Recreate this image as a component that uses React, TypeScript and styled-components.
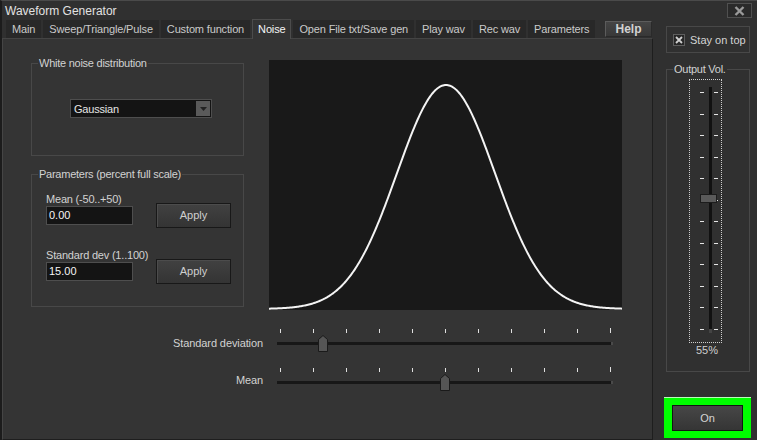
import React from 'react';
import styled, { createGlobalStyle } from 'styled-components';

const GlobalStyle = createGlobalStyle`
  html, body { margin: 0; padding: 0; background: #303030; }
  body { font-family: "Liberation Sans", Arial, sans-serif; font-size: 11px; color: #d0d0d0; }
  * { box-sizing: border-box; }
`;

const Window = styled.div`
  width: 757px;
  height: 440px;
  overflow: hidden;
  background: #303030;
  border-top: 1px solid #4a4a4a;
  border-left: 2px solid #1c1c1c;
  display: flex;
  flex-direction: column;
`;

const TitleBar = styled.div`
  height: 19px;
  display: flex;
  align-items: center;
  justify-content: space-between;
  padding: 0 5px 0 3px;
`;

const Title = styled.span`
  font-size: 12px;
  color: #e2e2e2;
`;

const CloseBox = styled.div`
  width: 25px;
  height: 15px;
  border: 1px solid #505050;
  background: #2a2a2a;
  display: flex;
  align-items: center;
  justify-content: center;
`;

const Body = styled.div`
  flex: 1;
  display: flex;
  min-height: 0;
`;

const MainCol = styled.div`
  width: 651px;
  display: flex;
  flex-direction: column;
`;

const TabRow = styled.div`
  height: 18px;
  display: flex;
  align-items: flex-end;
  gap: 2px;
  padding-left: 4px;
  position: relative;
  z-index: 1;
`;

const Tab = styled.div<{ $active?: boolean }>`
  height: ${(p) => (p.$active ? 20 : 18)}px;
  margin-bottom: ${(p) => (p.$active ? -1 : 0)}px;
  padding: 0 ${(p) => (p.$active ? 5 : 6)}px;
  line-height: ${(p) => (p.$active ? 19 : 18)}px;
  letter-spacing: -0.15px;
  background: ${(p) => (p.$active ? '#343434' : '#282828')};
  color: ${(p) => (p.$active ? '#f4f4f4' : '#cacaca')};
  border: ${(p) => (p.$active ? '1px solid #4c4c4c' : 'none')};
  border-bottom: none;
  white-space: nowrap;
  flex-shrink: 0;
`;

const HelpButton = styled.div`
  margin-left: auto;
  margin-right: 1px;
  align-self: flex-start;
  margin-top: 1px;
  width: 47px;
  flex-shrink: 0;
  height: 16px;
  border: 1px solid #5c5c5c;
  border-bottom-color: #2a2a2a;
  border-right-color: #2a2a2a;
  background: linear-gradient(#454545, #383838);
  color: #d2d2d2;
  font-weight: bold;
  font-size: 12px;
  line-height: 14px;
  text-align: center;
`;

const Panel = styled.div`
  flex: 1;
  background: #343434;
  border: 1px solid #1e1e1e;
  border-left-color: #454545;
  border-top-color: #444444;
  padding: 21px 0 0 28px;
  display: flex;
  flex-direction: column;
`;

const TopRow = styled.div`
  display: flex;
  align-items: flex-start;
  gap: 25px;
`;

const LeftCol = styled.div`
  width: 213px;
  padding-top: 3px;
  display: flex;
  flex-direction: column;
  gap: 18px;
`;

const GroupBox = styled.div<{ $h: number }>`
  position: relative;
  height: ${(p) => p.$h}px;
  border: 1px solid #484848;
`;

const GroupLegend = styled.span`
  position: absolute;
  top: -8px;
  left: 6px;
  padding: 0 1px;
  line-height: 14px;
  letter-spacing: -0.25px;
  background: #343434;
  color: #d2d2d2;
  white-space: nowrap;
`;

const DistContent = styled.div`
  padding: 35px 0 0 38px;
`;

const Select = styled.div`
  width: 142px;
  height: 19px;
  background: #141414;
  border: 1px solid #4e4e4e;
  display: flex;
  align-items: center;
  justify-content: space-between;
  padding: 0 1px 0 3px;
  color: #e6e6e6;
  letter-spacing: -0.2px;
`;

const SelectArrow = styled.div`
  width: 14px;
  height: 15px;
  background: #5a5a5a;
  display: flex;
  align-items: center;
  justify-content: center;
`;

const ParamsContent = styled.div`
  padding: 17px 0 0 14px;
  display: flex;
  flex-direction: column;
  gap: 20px;
`;

const Field = styled.div`
  display: flex;
  flex-direction: column;
`;

const FieldLabel = styled.div`
  line-height: 14px;
  margin-bottom: -3px;
  letter-spacing: -0.2px;
  color: #d2d2d2;
  white-space: nowrap;
`;

const FieldRow = styled.div`
  display: flex;
  align-items: center;
  gap: 23px;
`;

const TextInput = styled.div`
  width: 87px;
  height: 19px;
  background: #141414;
  border: 1px solid #4e4e4e;
  padding-left: 2px;
  line-height: 17px;
  color: #f4f4f4;
`;

const Button = styled.div`
  width: 75px;
  height: 25px;
  border: 1px solid #181818;
  background: linear-gradient(#414141, #343434);
  box-shadow: inset 1px 1px 0 #4c4c4c;
  color: #cfcfcf;
  line-height: 23px;
  text-align: center;
`;

const Chart = styled.div`
  width: 353px;
  height: 250px;
  background: #191919;
`;

const Sliders = styled.div`
  margin-top: 18px;
  display: flex;
  flex-direction: column;
`;

const SliderRow = styled.div`
  height: 39px;
  display: grid;
  grid-template-columns: 232px 336px;
  column-gap: 14px;
  align-items: start;
`;

const SliderLabel = styled.div<{ $dy: number }>`
  padding-top: ${(p) => p.$dy}px;
  line-height: 14px;
  text-align: right;
  letter-spacing: -0.1px;
  color: #d2d2d2;
`;

const SliderBody = styled.div`
  position: relative;
  height: 24px;
`;

const TickRow = styled.div`
  height: 5px;
  display: flex;
  justify-content: space-between;
  align-items: flex-end;
  padding: 0 2px 0 3px;
`;

const HTick = styled.span<{ $tall?: boolean }>`
  width: 1px;
  height: ${(p) => (p.$tall ? 5 : 4)}px;
  background: #e0e0e0;
`;

const HTrack = styled.div`
  margin-top: 9px;
  height: 3px;
  background: #171717;
  border-right: 2px solid #4a4a4a;
`;

const HThumb = styled.svg`
  position: absolute;
  top: 7px;
  width: 10px;
  height: 17px;
`;

const Sidebar = styled.div`
  width: 104px;
  padding: 6px 7px 0 13px;
  display: flex;
  flex-direction: column;
`;

const StayBox = styled.div`
  height: 27px;
  border: 1px solid #484848;
  display: flex;
  align-items: center;
  gap: 5px;
  padding-left: 6px;
  color: #d4d4d4;
`;

const CheckBox = styled.div`
  width: 12px;
  height: 12px;
  border: 1px solid #5e5e5e;
  background: #262626;
  display: flex;
  align-items: center;
  justify-content: center;
`;

const VolGroup = styled(GroupBox)`
  margin-top: 16px;
  background: #303030;
`;

const VolLegend = styled(GroupLegend)`
  background: #303030;
`;

const VolContent = styled.div`
  padding: 9px 0 0 22px;
  width: 60px;
  display: flex;
  flex-direction: column;
  align-items: flex-start;
`;

const DottedBox = styled.div`
  position: relative;
  width: 33px;
  height: 264px;
  border: 1px dotted #cfcfcf;
  display: flex;
  align-items: flex-start;
  padding-left: 10px;
`;

const VTickCol = styled.div`
  margin-top: 12px;
  width: 4px;
  height: 238px;
  display: flex;
  flex-direction: column;
  justify-content: space-between;
`;

const VTick = styled.span`
  height: 1px;
  background: #e6e6e6;
`;

const VTrack = styled.div`
  margin: 7px 2px 0 5px;
  width: 3px;
  height: 246px;
  background: #111;
  border-bottom: 4px solid #444;
`;

const VThumb = styled.div`
  position: absolute;
  left: 10px;
  width: 17px;
  height: 9px;
  background: #5a5a5a;
  border: 1px solid #1c1c1c;
`;

const Percent = styled.div`
  width: 33px;
  padding-left: 3px;
  text-align: center;
  line-height: 14px;
  color: #cfcfcf;
`;

const OnFrame = styled.div`
  margin: 25px 0 0 -2px;
  width: 87px;
  height: 41px;
  background: #00ff00;
  border-top: 1px solid #b8ffb8;
  padding: 7px 8px 7px 8px;
`;

const OnButton = styled.div`
  width: 71px;
  height: 26px;
  border: 1px solid #141414;
  background: linear-gradient(#474747, #353535);
  color: #d4d4d4;
  line-height: 24px;
  text-align: center;
`;

const tabs = ['Main', 'Sweep/Triangle/Pulse', 'Custom function', 'Noise', 'Open File txt/Save gen', 'Play wav', 'Rec wav', 'Parameters'];

function gaussPath(w: number, h: number, mu: number, sigma: number) {
  const pts: string[] = [];
  for (let x = 0; x <= w; x += 1) {
    const v = Math.exp(-((x - mu) * (x - mu)) / (2 * sigma * sigma));
    const y = h - 1 - (h - 26) * v;
    pts.push(`${x === 0 ? 'M' : 'L'}${x.toFixed(1)},${y.toFixed(2)}`);
  }
  return pts.join(' ');
}

const Slider: React.FC<{ label: string; value: number; dy: number }> = ({ label, value, dy }) => {
  const ticks = Array.from({ length: 11 }, (_, i) => i);
  const left = 3 + 330 * value - 5;
  return (
    <SliderRow>
      <SliderLabel $dy={dy}>{label}</SliderLabel>
      <SliderBody>
        <TickRow>
          {ticks.map((i) => (
            <HTick key={i} $tall={i === 10} />
          ))}
        </TickRow>
        <HTrack />
        <HThumb viewBox="0 0 10 17" style={{ left }}>
          <polygon points="0.5,4.5 5,0.5 9.5,4.5 9.5,16.5 0.5,16.5" fill="#555" stroke="#1a1a1a" strokeWidth="1" />
        </HThumb>
      </SliderBody>
    </SliderRow>
  );
};

export default function App() {
  const vol = 0.55;
  const vticks = Array.from({ length: 12 }, (_, i) => i);
  return (
    <>
      <GlobalStyle />
      <Window>
        <TitleBar>
          <Title>Waveform Generator</Title>
          <CloseBox>
            <svg width="11" height="10" viewBox="0 0 11 10">
              <path d="M1.5 1 L9.5 9 M9.5 1 L1.5 9" stroke="#9a9a9a" strokeWidth="2.4" />
            </svg>
          </CloseBox>
        </TitleBar>
        <Body>
          <MainCol>
            <TabRow>
              {tabs.map((t) => (
                <Tab key={t} $active={t === 'Noise'}>
                  {t}
                </Tab>
              ))}
              <HelpButton>Help</HelpButton>
            </TabRow>
            <Panel>
              <TopRow>
                <LeftCol>
                  <GroupBox $h={93}>
                    <GroupLegend>White noise distribution</GroupLegend>
                    <DistContent>
                      <Select>
                        <span>Gaussian</span>
                        <SelectArrow>
                          <svg width="7" height="4" viewBox="0 0 7 4">
                            <polygon points="0,0 7,0 3.5,4" fill="#222" />
                          </svg>
                        </SelectArrow>
                      </Select>
                    </DistContent>
                  </GroupBox>
                  <GroupBox $h={133}>
                    <GroupLegend>Parameters (percent full scale)</GroupLegend>
                    <ParamsContent>
                      <Field>
                        <FieldLabel>Mean (-50..+50)</FieldLabel>
                        <FieldRow>
                          <TextInput>0.00</TextInput>
                          <Button>Apply</Button>
                        </FieldRow>
                      </Field>
                      <Field>
                        <FieldLabel>Standard dev (1..100)</FieldLabel>
                        <FieldRow>
                          <TextInput>15.00</TextInput>
                          <Button>Apply</Button>
                        </FieldRow>
                      </Field>
                    </ParamsContent>
                  </GroupBox>
                </LeftCol>
                <Chart>
                  <svg width="353" height="250" viewBox="0 0 353 250">
                    <path d={gaussPath(353, 250, 177, 49)} fill="none" stroke="#f4f4f4" strokeWidth="2" />
                  </svg>
                </Chart>
              </TopRow>
              <Sliders>
                <Slider label="Standard deviation" value={0.13} dy={8} />
                <Slider label="Mean" value={0.5} dy={6} />
              </Sliders>
            </Panel>
          </MainCol>
          <Sidebar>
            <StayBox>
              <CheckBox>
                <svg width="8" height="8" viewBox="0 0 8 8">
                  <path d="M1 1 L7 7 M7 1 L1 7" stroke="#d0d0d0" strokeWidth="1.8" />
                </svg>
              </CheckBox>
              <span>Stay on top</span>
            </StayBox>
            <VolGroup $h={303}>
              <VolLegend>Output Vol.</VolLegend>
              <VolContent>
                <DottedBox>
                  <VTickCol>
                    {vticks.map((i) => (
                      <VTick key={i} />
                    ))}
                  </VTickCol>
                  <VTrack />
                  <VTickCol>
                    {vticks.map((i) => (
                      <VTick key={i} />
                    ))}
                  </VTickCol>
                  <VThumb style={{ top: 12 + (1 - vol) * 237 - 4.5 }} />
                </DottedBox>
                <Percent>55%</Percent>
              </VolContent>
            </VolGroup>
            <OnFrame>
              <OnButton>On</OnButton>
            </OnFrame>
          </Sidebar>
        </Body>
      </Window>
    </>
  );
}
